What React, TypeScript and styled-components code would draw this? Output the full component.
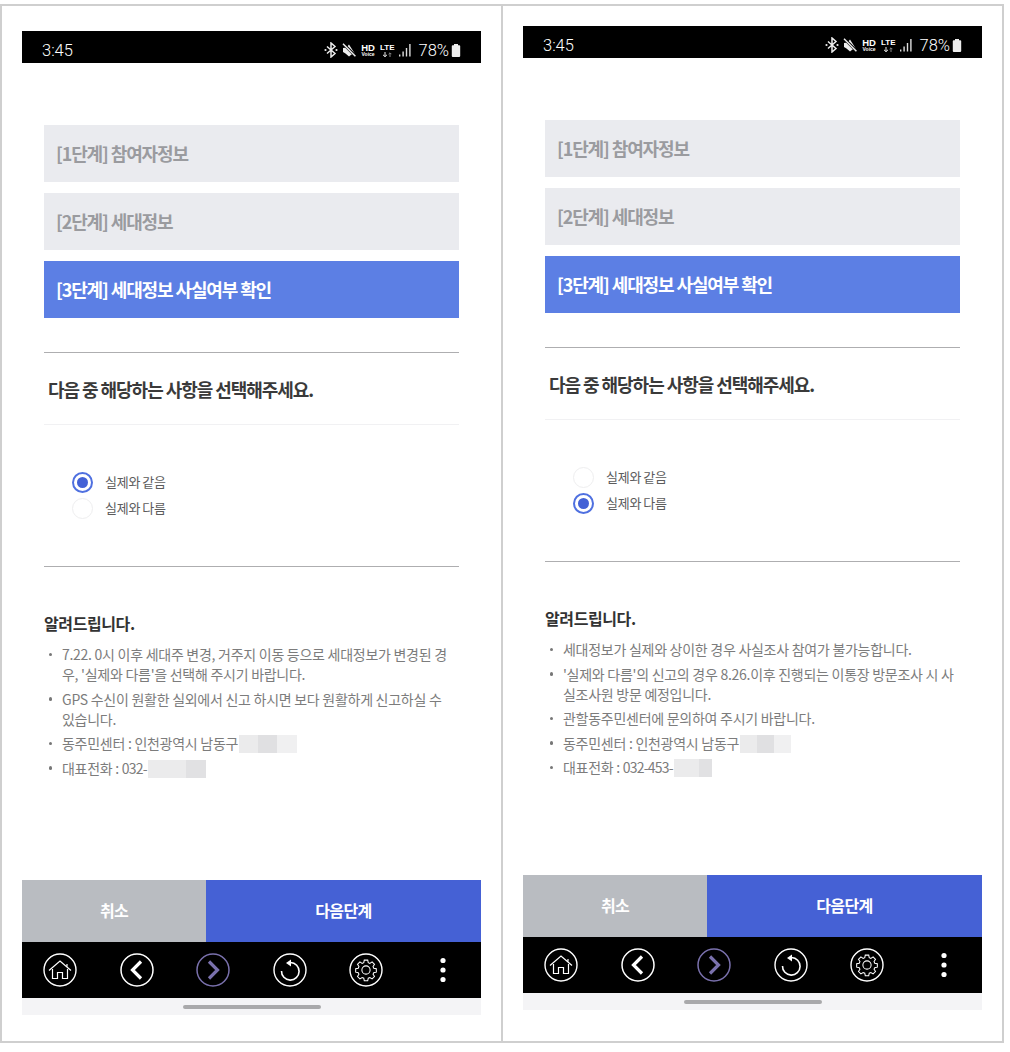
import React from 'react'
import styled, { createGlobalStyle } from 'styled-components'

const GlobalStyle = createGlobalStyle`
  html, body {
    margin: 0;
    padding: 0;
    background: #fff;
  }
  * {
    box-sizing: border-box;
  }
  body {
    font-family: "Noto Sans CJK KR", "Noto Sans", sans-serif;
  }
`

// Two screenshots side by side
const Page = styled.div`
  display: flex;
  width: 1010px;
  height: 1052px;
  padding-top: 4px;
`

const Panel = styled.section<{ $top: number; $first?: boolean }>`
  width: 503px;
  height: 1039px;
  padding: ${(props) => props.$top}px 0 0 20px;
  border: 2px solid #cfcfcf;
  margin-left: ${(props) => (props.$first ? '0' : '-2px')};
`

const Phone = styled.div`
  display: flex;
  flex-direction: column;
  width: 459px;
  height: 984px;
`

const StatusBar = styled.div`
  display: flex;
  align-items: center;
  justify-content: space-between;
  height: 32px;
  padding: 6px 20px 0 20px;
  background: #000;
  color: #fff;
`

const Clock = styled.span`
  font-family: "Roboto", sans-serif;
  font-size: 16.5px;
  font-weight: 300;
`

const StatusIcons = styled.div`
  display: flex;
  align-items: center;
`

const TinyStack = styled.div<{ $gap: number }>`
  display: flex;
  flex-direction: column;
  align-items: center;
  margin-left: ${(props) => props.$gap}px;
  font-family: "Liberation Sans", sans-serif;
  font-weight: 700;
  line-height: 1;
`

const TinyMain = styled.span<{ $size: number }>`
  font-size: ${(props) => props.$size}px;
  line-height: 8px;
`

const TinySub = styled.span`
  font-size: 5px;
  line-height: 5px;
`

const Percent = styled.span`
  margin-left: 6px;
  font-family: "Roboto", sans-serif;
  font-size: 16.5px;
  font-weight: 300;
`

const Content = styled.main`
  flex: 1;
  padding: 62px 22px 0;
  background: #fff;
`

const Steps = styled.div`
  display: flex;
  flex-direction: column;
  gap: 11px;
`

const Step = styled.div<{ $active?: boolean }>`
  display: flex;
  align-items: center;
  height: 57px;
  padding: 0 12px 1px;
  background: ${(props) => (props.$active ? '#5c7fe4' : '#eaebef')};
  color: ${(props) => (props.$active ? '#fff' : '#9a9b9f')};
  font-size: 18px;
  font-weight: 700;
  letter-spacing: -1.12px;
`

const Rule = styled.hr`
  height: 1px;
  margin: 0;
  border: 0;
  background: #aeaeb0;
`

const StepsRule = styled(Rule)`
  margin-top: 34px;
`

const Question = styled.h2`
  margin: 0;
  padding: 0 4px;
  height: 72px;
  border-bottom: 1px solid #f1f1f3;
  color: #3a3a3a;
  font-size: 18px;
  font-weight: 700;
  line-height: 72px;
  letter-spacing: -1.05px;
`

const RadioGroup = styled.div`
  display: flex;
  flex-direction: column;
  padding: 44px 0 0 28px;
  height: 141px;
`

const RadioRow = styled.label`
  display: flex;
  align-items: center;
  height: 26px;
  gap: 12px;
  color: #5c5c5c;
  font-size: 13px;
  letter-spacing: -0.25px;
  word-spacing: -0.5px;
`

const RadioText = styled.span`
  margin-bottom: 2px;
`

const RadioMark = styled.span<{ $checked?: boolean }>`
  display: flex;
  align-items: center;
  justify-content: center;
  width: 21px;
  height: 21px;
  border-radius: 50%;
  border: ${(props) => (props.$checked ? '2px solid #4f70e0' : '1px solid #eeeeef')};
  background: #fff;

  &::after {
    content: '';
    display: ${(props) => (props.$checked ? 'block' : 'none')};
    width: 11px;
    height: 11px;
    border-radius: 50%;
    background: #4361d6;
  }
`

const Notice = styled.div`
  padding-top: 44px;
`

const NoticeTitle = styled.h3`
  margin: 0 0 9px;
  color: #333;
  font-size: 16px;
  font-weight: 700;
  line-height: 24px;
  letter-spacing: -0.4px;
`

const NoticeList = styled.ul`
  display: flex;
  flex-direction: column;
  gap: 4.5px;
  margin: 0;
  padding: 0;
  list-style: none;
`

const NoticeItem = styled.li`
  position: relative;
  padding-left: 18px;
  color: #7c7c7c;
  font-size: 14px;
  line-height: 20px;
  letter-spacing: -0.27px;
  white-space: nowrap;

  &::before {
    content: '';
    position: absolute;
    left: 4.5px;
    top: 8.5px;
    width: 3.5px;
    height: 3.5px;
    border-radius: 50%;
    background: #777;
  }
`

const Digits = styled.span`
  letter-spacing: -0.8px;
`

// Blurred out part of an address or a phone number
const Redacted = styled.span<{ $width: number; $dark?: boolean }>`
  display: inline-block;
  width: ${(props) => props.$width}px;
  height: 18px;
  margin-left: 1px;
  vertical-align: -4px;
  background: ${(props) =>
    props.$dark
      ? 'linear-gradient(90deg, #ebebec 0 33%, #e0e0e2 33% 66%, #f0f0f1 66%)'
      : 'linear-gradient(90deg, #ebebec 0 66%, #e1e1e3 66%)'};
`

const Actions = styled.div`
  display: grid;
  grid-template-columns: 184px 1fr;
  height: 62px;
`

const ActionButton = styled.button<{ $primary?: boolean }>`
  border: 0;
  padding: 0 0 2px;
  background: ${(props) => (props.$primary ? '#4561d5' : '#b9bcc1')};
  color: #fff;
  font-family: inherit;
  font-size: 16px;
  font-weight: 700;
  letter-spacing: -0.6px;
`

const NavBar = styled.nav`
  display: grid;
  grid-template-columns: repeat(6, 1fr);
  align-items: center;
  justify-items: center;
  height: 56px;
  padding-bottom: 1px;
  background: #000;
`

const NavCircle = styled.svg`
  display: block;
  width: 34px;
  height: 34px;
`

const GestureBar = styled.div`
  display: flex;
  align-items: center;
  justify-content: center;
  height: 17px;
  background: #f4f4f6;

  &::after {
    content: '';
    width: 138px;
    height: 4px;
    border-radius: 2px;
    background: #a9a9ab;
  }
`

const GEAR =
  'M15 5.500h4l.6 3 1.900.8 2.600-1.700 2.800 2.800-1.700 2.600.8 1.900 3 .6v4l-3 .6-.8 1.900 1.700 2.600-2.800 2.800-2.600-1.700-1.900.8-.6 3h-4l-.6-3-1.900-.8-2.600 1.700-2.800-2.800 1.700-2.600-.8-1.900-3-.6v-4l3-.6.8-1.900-1.700-2.600 2.800-2.800 2.600 1.700 1.900-.8z'

const BluetoothIcon = () => (
  <svg width="14" height="16" viewBox="0 0 14 16" fill="none" stroke="#eee" strokeWidth="1.5">
    <path d="M3 4.500l8 7-4 3.500V1l4 3.500-8 7" />
    <circle cx="1.500" cy="8" r="1.100" fill="#eee" stroke="none" />
    <circle cx="12.500" cy="8" r="1.100" fill="#eee" stroke="none" />
  </svg>
)

const MuteIcon = () => (
  <svg width="14" height="14" viewBox="0 0 14 14" style={{ marginLeft: 4 }}>
    <path d="M1 5l3.500-.5L7 1.500l6 9.500-3.500.5L7 13.500 3.500 10.500 1 9z" fill="#eee" />
    <path d="M1.500 1l12 12" stroke="#000" strokeWidth="2.800" />
    <path d="M1 .8l12.400 12.400" stroke="#eee" strokeWidth="1.500" />
  </svg>
)

const LteArrows = () => (
  <svg width="10" height="5" viewBox="0 0 10 5" fill="none" stroke="#eee" strokeWidth="1">
    <path d="M3 0v4.500M1 2.800l2 1.900 2-1.900" />
    <path d="M8 5V1M6.600 2.200L8 .8l1.400 1.400" stroke="#888" />
  </svg>
)

const SignalIcon = () => (
  <svg width="13" height="13" viewBox="0 0 13 13" fill="#ddd" style={{ marginLeft: 5 }}>
    <rect x="0" y="10.500" width="1.400" height="2" />
    <rect x="3.400" y="7.500" width="1.400" height="5" />
    <rect x="6.800" y="4" width="1.400" height="8.500" />
    <rect x="10.200" y="0" width="1.400" height="12.500" />
  </svg>
)

const BatteryIcon = () => (
  <svg width="10" height="13" viewBox="0 0 10 13" fill="#eee" style={{ marginLeft: 2 }}>
    <path d="M3 0h4v1.200h1.300c.5 0 .9.4.9.9v10c0 .5-.4.9-.9.9H1.700c-.5 0-.9-.4-.9-.9v-10c0-.5.4-.9.9-.9H3z" />
  </svg>
)

const Status = () => (
  <StatusBar>
    <Clock>3:45</Clock>
    <StatusIcons>
      <BluetoothIcon />
      <MuteIcon />
      <TinyStack $gap={5}>
        <TinyMain $size={9.5}>HD</TinyMain>
        <TinySub>Voice</TinySub>
      </TinyStack>
      <TinyStack $gap={5}>
        <TinyMain $size={8}>LTE</TinyMain>
        <LteArrows />
      </TinyStack>
      <SignalIcon />
      <Percent>78%</Percent>
      <BatteryIcon />
    </StatusIcons>
  </StatusBar>
)

const NavIcons = () => (
  <NavBar>
    <NavCircle viewBox="0 0 34 34" fill="none" stroke="#fff">
      <circle cx="17" cy="17" r="16" strokeWidth="1.400" />
      <path d="M6 17.500L17 8l11 9.500M24 11v3.500" strokeWidth="1.200" />
      <path d="M9.500 16v9.500h5v-6h5v6h5V16" strokeWidth="1.200" />
    </NavCircle>
    <NavCircle viewBox="0 0 34 34" fill="none" stroke="#fff">
      <circle cx="17" cy="17" r="16" strokeWidth="1.500" />
      <path d="M21 8.500L12.500 17l8.500 8.500" strokeWidth="3.200" />
    </NavCircle>
    <NavCircle viewBox="0 0 34 34" fill="none" stroke="#7a71ad">
      <circle cx="17" cy="17" r="16" strokeWidth="1.500" />
      <path d="M13 8.500L21.500 17 13 25.500" strokeWidth="3.200" />
    </NavCircle>
    <NavCircle viewBox="0 0 34 34" fill="none" stroke="#fff">
      <circle cx="17" cy="17" r="16" strokeWidth="1.400" />
      <path d="M17.500 9.500A8.800 8.800 0 1 1 8.500 18" strokeWidth="1.600" />
      <path d="M18 6.500v7l-5-3.500z" fill="#fff" stroke="none" />
    </NavCircle>
    <NavCircle viewBox="0 0 34 34" fill="none" stroke="#fff">
      <circle cx="17" cy="17" r="16" strokeWidth="1.400" />
      <g transform="translate(17 17) scale(.86) translate(-17 -17)" strokeWidth="1.200">
        <path d={GEAR} />
        <circle cx="17" cy="17" r="4.800" />
      </g>
    </NavCircle>
    <NavCircle viewBox="0 0 34 34" fill="#fff" stroke="none">
      <circle cx="17" cy="7.500" r="2.600" />
      <circle cx="17" cy="17" r="2.600" />
      <circle cx="17" cy="26.500" r="2.600" />
    </NavCircle>
  </NavBar>
)

type ScreenProps = {
  top: number
  first?: boolean
  checked: 'same' | 'different'
  notices: React.ReactNode[]
}

const Screen = ({ top, first, checked, notices }: ScreenProps) => (
  <Panel $top={top} $first={first}>
    <Phone>
      <Status />
      <Content>
        <Steps>
          <Step>[1단계] 참여자정보</Step>
          <Step>[2단계] 세대정보</Step>
          <Step $active>[3단계] 세대정보 사실여부 확인</Step>
        </Steps>
        <StepsRule />
        <Question>다음 중 해당하는 사항을 선택해주세요.</Question>
        <RadioGroup>
          <RadioRow>
            <RadioMark $checked={checked === 'same'} />
            <RadioText>실제와 같음</RadioText>
          </RadioRow>
          <RadioRow>
            <RadioMark $checked={checked === 'different'} />
            <RadioText>실제와 다름</RadioText>
          </RadioRow>
        </RadioGroup>
        <Rule />
        <Notice>
          <NoticeTitle>알려드립니다.</NoticeTitle>
          <NoticeList>
            {notices.map((notice, index) => (
              <NoticeItem key={index}>{notice}</NoticeItem>
            ))}
          </NoticeList>
        </Notice>
      </Content>
      <Actions>
        <ActionButton>취소</ActionButton>
        <ActionButton $primary>다음단계</ActionButton>
      </Actions>
      <NavIcons />
      <GestureBar />
    </Phone>
  </Panel>
)

const leftNotices = [
  <>
    7.22. 0시 이후 세대주 변경, 거주지 이동 등으로 세대정보가 변경된 경<br />
    우, '실제와 다름'을 선택해 주시기 바랍니다.
  </>,
  <>
    GPS 수신이 원활한 실외에서 신고 하시면 보다 원활하게 신고하실 수<br />
    있습니다.
  </>,
  <>
    동주민센터 : 인천광역시 남동구
    <Redacted $width={58} $dark />
  </>,
  <>
    대표전화 : <Digits>032-</Digits>
    <Redacted $width={58} />
  </>,
]

const rightNotices = [
  <>세대정보가 실제와 상이한 경우 사실조사 참여가 불가능합니다.</>,
  <>
    '실제와 다름'의 신고의 경우 8.26.이후 진행되는 이통장 방문조사 시 사<br />
    실조사원 방문 예정입니다.
  </>,
  <>관할동주민센터에 문의하여 주시기 바랍니다.</>,
  <>
    동주민센터 : 인천광역시 남동구
    <Redacted $width={51} $dark />
  </>,
  <>
    대표전화 : <Digits>032-453-</Digits>
    <Redacted $width={38} />
  </>,
]

export default function App() {
  return (
    <>
      <GlobalStyle />
      <Page>
        <Screen top={25} first checked="same" notices={leftNotices} />
        <Screen top={20} checked="different" notices={rightNotices} />
      </Page>
    </>
  )
}
